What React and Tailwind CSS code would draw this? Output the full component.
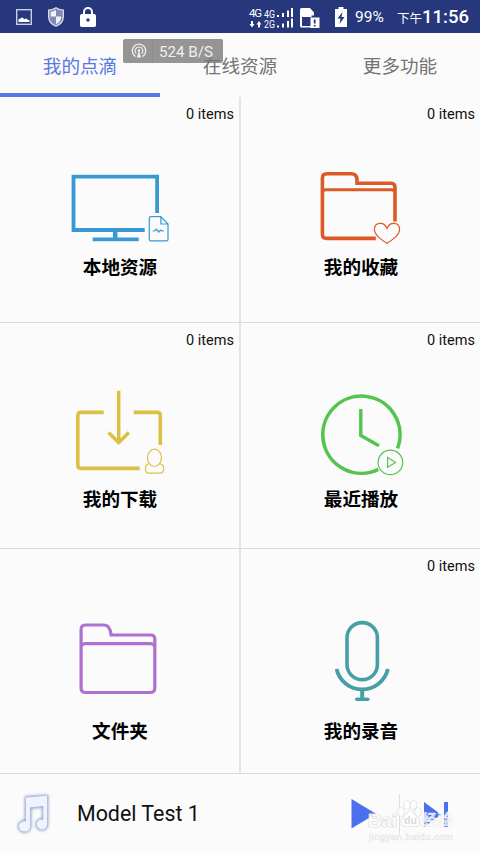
/**
 * 音楽プレーヤーのホーム画面
 */
import { useState } from 'react';

const TABS = ['我的点滴', '在线资源', '更多功能'];

// ローカルリソース
function MonitorIcon() {
    return (
        <svg className="h-[100px] w-[130px]" viewBox="55.300 155 130 100" fill="none" stroke="#3899d3">
            <path d="M157.400 213V176.600H73.800V230H145" strokeWidth="3.800" />
            <path d="M115.500 231v7" strokeWidth="4.400" />
            <path d="M93 239.400h46" strokeWidth="3.800" />
            <path d="M151 216.600h10.200l7.100 7.400v15.400q0 1.400-1.400 1.400H151q-1.400 0-1.400-1.400V218q0-1.400 1.400-1.400zM161.200 216.600V224h7.100" strokeWidth="1.200" />
            <path d="M153 231h2l1.600-1.800 2.400 2.800 2-2 1.200 1h2" strokeWidth="1.200" />
        </svg>
    );
}

// お気に入り
function FavoriteIcon() {
    return (
        <svg className="h-[100px] w-[130px]" viewBox="296.200 155 130 100" fill="none" stroke="#dc5a26">
            <path d="M395.200 221.500V187.500q0-4.200-4.200-4.200H357.200V180q0-6.200-6-6.200H327q-4.400 0-4.400 4.400V234q0 4.400 4.400 4.400H376" strokeWidth="3.600" />
            <path d="M322.600 193q0-3.200 3.400-3.200h65.800q3.400 0 3.400 3.200" strokeWidth="3" />
            <path d="M387.200 243.300C381 239.200 374.600 235 374.600 229.300c0-6.800 9.400-8.600 12.600-.9 3.200-7.700 12.600-5.900 12.600.9 0 5.700-6.400 9.900-12.600 14z" strokeWidth="1.200" />
        </svg>
    );
}

// ダウンロード
function DownloadIcon() {
    return (
        <svg className="h-[100px] w-[130px]" viewBox="55.300 387 130 100" fill="none" stroke="#dcc044">
            <path d="M104 412.400H81.500q-3.400 0-3.400 3.400V465q0 3.400 3.400 3.400H140M134 412.400h23.400q3.200 0 3.200 3.200V445" strokeWidth="3.600" />
            <path d="M119 390.800V442M108.800 432.600l10.200 10 10.200-10" strokeWidth="3.500" />
            <ellipse cx="154.800" cy="457.800" rx="7" ry="8.700" strokeWidth="1.200" />
            <path d="M149 463.800c-4.400.9-4.600 9.400 0 9.400h11.600c4.600 0 4.400-8.500 0-9.400" strokeWidth="1.200" />
        </svg>
    );
}

// 最近の再生
function RecentIcon() {
    return (
        <svg className="h-[100px] w-[130px]" viewBox="296.200 387 130 100" fill="none" stroke="#54c450">
            <path d="M397.700 448.400A38.600 38.600 0 1 0 378.500 469.400" strokeWidth="3.600" />
            <path d="M361 409v26.600l18.200 10.200" strokeWidth="3.400" />
            <circle cx="390.600" cy="462.400" r="12.300" strokeWidth="1.200" />
            <path d="M387.800 457.600v9.600l8-4.800z" strokeWidth="1.200" />
        </svg>
    );
}

// フォルダ
function FolderIcon() {
    return (
        <svg className="h-[100px] w-[130px]" viewBox="55.500 619 130 100" fill="none" stroke="#b070cf">
            <path d="M155.300 647V639q0-4-4-4H111.600q-.9-10-7.200-10H86q-4.400 0-4.400 4.400V647" strokeWidth="3.200" />
            <rect x="81.600" y="643.600" width="73.700" height="48.900" rx="4" strokeWidth="3.200" />
        </svg>
    );
}

// 録音
function RecordIcon() {
    return (
        <svg className="h-[100px] w-[130px]" viewBox="296.200 619 130 100" fill="none" stroke="#469fa5">
            <rect x="347.200" y="622.600" width="30.400" height="57" rx="15.200" strokeWidth="3.600" />
            <path d="M336.700 669a26.400 26.400 0 0 0 51.400 0" strokeWidth="3.800" />
            <path d="M362.400 689v9.500" strokeWidth="4" />
            <path d="M357 699.300h11" strokeWidth="3.600" strokeLinecap="round" />
        </svg>
    );
}

const ITEMS = [
    { label: '本地资源', count: '0 items', icon: MonitorIcon, cell: 'border-r-2 pt-[58px]' },
    { label: '我的收藏', count: '0 items', icon: FavoriteIcon, cell: 'pt-[58px]' },
    { label: '我的下载', count: '0 items', icon: DownloadIcon, cell: 'border-r-2 pt-16' },
    { label: '最近播放', count: '0 items', icon: RecentIcon, cell: 'pt-16' },
    { label: '文件夹', icon: FolderIcon, cell: 'border-r-2 pt-[70px]' },
    { label: '我的录音', count: '0 items', icon: RecordIcon, cell: 'pt-[70px]' }
];

function StatusBar() {
    return (
        <header className="flex h-[33px] items-center bg-[#26377b] pl-4 pr-[11px] text-white">
            <svg className="h-4 w-4" viewBox="0 0 16 16" fill="none">
                <rect x=".7" y=".7" width="14.600" height="14.600" stroke="#c8cde2" strokeWidth="1.400" />
                <path d="M2.500 13v-2.500q1-1.500 2.200-.8Q6 7.500 7.500 9.500q1.200 1 2 .2 1.500-.4 2 1 1.500-.2 2 .8V13z" fill="#fff" />
            </svg>
            <svg className="ml-4 h-5 w-4" viewBox="0 0 16 20">
                <path d="M8 .7Q11.500 3 15.300 3v7c0 5-3.500 7.700-7.300 9.300C4.200 17.700.7 15 .7 10V3Q4.500 3 8 .7z" fill="#7f8ab5" stroke="#e6e8f2" strokeWidth="1.200" />
                <path d="M8 3v6.500H2.800V4.700Q5.500 4.500 8 3zM8 9.500h5.200q.1 5-5.200 7.700z" fill="#f2f3f8" />
            </svg>
            <svg className="ml-4 h-5 w-4" viewBox="0 0 16 20">
                <path d="M4 8V5a4 4 0 0 1 8 0v3" fill="none" stroke="#fff" strokeWidth="2" />
                <rect y="7" width="16" height="13" rx="1.800" fill="#fff" />
                <circle cx="8" cy="13" r="1.700" fill="#26377b" />
            </svg>

            {/* 電波とSIM */}
            <svg className="ml-[152px] h-[22px] w-[72px] font-[Roboto]" viewBox="248 5 72 22" fill="#fff">
                <text x="249" y="15.500" fontSize="11.500" textLength="13">4G</text>
                <text x="264" y="16.500" fontSize="10" textLength="11" lengthAdjust="spacingAndGlyphs">4G</text>
                <text x="264" y="26.500" fontSize="10" textLength="11" lengthAdjust="spacingAndGlyphs">2G</text>
                <path d="M251 20h2v3h1.500L252 26.500 249.500 23h1.500zM258 26.500h2v-3h1.500L259 20l-2.500 3.500h1.500z" />
                <path d="M277 14h2v2h-2zM282 12h2v4h-2zM287 9.500h2v6.500h-2zM291 7h2v9h-2zM277 24.500h2v2h-2zM282 22.500h2v4h-2zM287 20h2v6.500h-2zM291 17.500h2v9h-2z" />
                <path d="M301.500 7h8.500l4 4.500v3h-2.500v12h-10a1.500 1.500 0 0 1-1.500-1.500V8.500q0-1.500 1.500-1.500z" />
                <path d="M302 16h9v9h-9z" fill="#26377b" />
                <path d="M310.500 16.500h9V27h-9z" />
                <path d="M313.800 18.500h1.800v4h-1.800zM313.800 24h1.800v1.500h-1.800z" fill="#26377b" />
            </svg>
            <svg className="ml-[15px] h-5 w-3" viewBox="0 0 12 20">
                <path d="M3.500 0h5v2H12v18H0V2h3.500z" fill="#fff" />
                <path d="M7.500 5 2.500 11.500h3L4.500 17l5-7h-3z" fill="#26377b" />
            </svg>
            <span className="ml-2 w-[42px] whitespace-nowrap font-[Roboto] text-[15.500px] leading-5">99%</span>
            <span className="mt-0.5 font-['Noto_Sans_CJK_SC',sans-serif] text-[12.500px] leading-5">下午</span>
            <span className="whitespace-nowrap font-[Roboto] text-[18.500px] font-medium leading-5">11:56</span>
        </header>
    );
}

function SpeedBadge() {
    return (
        <div className="absolute left-[123px] top-[39px] flex h-6 w-[100px] items-center rounded-[2px] bg-[#737373]/75 text-[#f0f0f0]">
            <svg className="ml-2 h-4 w-4" viewBox="0 0 16 16" fill="none" stroke="currentColor" strokeWidth="1.300">
                <path d="M4.500 13.600a6.700 6.700 0 1 1 7 0M5.300 10.500a3.800 3.800 0 1 1 5.400 0" />
                <path d="M8 7.500 5.800 14.500h4.400z" fill="currentColor" stroke="none" />
                <circle cx="8" cy="7.500" r="1.300" fill="currentColor" stroke="none" />
            </svg>
            <span className="ml-[5px] h-6 w-px bg-black/5" />
            <span className="ml-1.5 mt-0.5 whitespace-nowrap font-[Roboto] text-[15.200px] leading-6">524 B/S</span>
        </div>
    );
}

function PlayerBar() {
    return (
        <footer className="flex h-[79px] items-center">
            <svg className="ml-3 h-12 w-11 overflow-visible" viewBox="12 789 44 48">
                <defs>
                    <filter id="glow" x="-30%" y="-30%" width="160%" height="160%">
                        <feGaussianBlur stdDeviation="1.700" />
                    </filter>
                    <path id="note" d="M26.500 797 46.500 795.500V823.500a4.600 4.400 0 1 1-2.600-4V804.500L29.500 806V825.500a5 4.600 0 1 1-3-4.300z" />
                </defs>
                <use href="#note" fill="#8d9ac4" stroke="#8d9ac4" strokeWidth="3.400" filter="url(#glow)" />
                <use href="#note" fill="#eef3ff" stroke="#eef3ff" strokeWidth="1.200" />
                <path d="M27 797 46 795.500V803L27 805z" fill="#eef3ff" />
            </svg>
            <span className="ml-[21px] mt-px font-[Roboto] text-[21.400px] leading-8 text-[#111]">Model Test 1</span>
            <svg className="ml-auto mr-[31px] h-10 w-[98px]" viewBox="351 793 98 40" fill="#4a70ee">
                <path d="M351.500 798v29.500L376 812.800z" />
                <path d="M399 793h1v40h-1z" fill="#dedede" />
                <path d="M424 801v25l17-12.500zM444 801h4v25h-4z" />
            </svg>
        </footer>
    );
}

// 右下の透かし
function Watermark() {
    return (
        <svg className="pointer-events-none absolute bottom-0 right-0 h-[66px] w-[122px] font-['Liberation_Sans',sans-serif]" viewBox="358 787 122 66">
            <g fill="#fff" fillOpacity=".8" stroke="#dcdcdc" strokeWidth="1.200" paintOrder="stroke">
                <ellipse cx="401" cy="812" rx="3" ry="4" />
                <ellipse cx="407" cy="805" rx="3" ry="4" />
                <ellipse cx="413.500" cy="805" rx="3" ry="4" />
                <ellipse cx="418" cy="812" rx="3" ry="4" />
                <path d="M410 811c-3 0-3.500 4-6.500 6.500-4 4-2 9 2 9 2.500 0 6-.6 9 0 5 .6 7-4.500 3-9-3-3-4-6.500-7.500-6.500z" />
                <text x="368" y="827" fontSize="18" fontWeight="bold" textLength="29" lengthAdjust="spacingAndGlyphs">Bai</text>
            </g>
            <text x="422" y="825" fontSize="14.500" fontWeight="bold" fill="#fff" fillOpacity=".75" stroke="#e2e2e2" strokeWidth=".6" paintOrder="stroke" textLength="30" fontFamily="Noto Sans CJK SC">经验</text>
            <text x="404" y="823.500" fontSize="10.500" fontWeight="bold" fill="#dadada">du</text>
            <text x="369" y="840" fontSize="9.500" fill="#fff" stroke="#e4e4e4" strokeWidth=".5" textLength="84">jingyan.baidu.com</text>
        </svg>
    );
}

export default function App() {
    const [active, setActive] = useState(0);

    return (
        <div className="relative flex h-[853px] w-[480px] flex-col overflow-hidden bg-[#fbfbfb] font-['Noto_Sans_CJK_SC',sans-serif]">
            <StatusBar />

            {/* タブ */}
            <nav className="grid h-16 grid-cols-3">
                {TABS.map((tab, index) => (
                    <button
                        key={tab}
                        onClick={() => setActive(index)}
                        className={`border-b-4 pb-0.5 pt-1.5 text-[18.600px] leading-[52px] ${
                            index === active
                                ? 'border-[#5677e4] text-[#5677e4]'
                                : 'border-transparent text-[#747474]'
                        }`}
                    >
                        {tab}
                    </button>
                ))}
            </nav>

            {/* メニュー */}
            <main className="grid grid-cols-[241px_239px] grid-rows-[226px_226px_225px]">
                {ITEMS.map(({ label, count, icon: Icon, cell }) => (
                    <section key={label} className={`relative flex flex-col items-center border-b border-b-[#dadada] border-r-[#e4e4e4] ${cell}`}>
                        {count && (
                            <span className="absolute right-[5px] top-[9px] font-[Roboto] text-[14.500px] leading-[18px] text-[#111]">
                                {count}
                            </span>
                        )}
                        <Icon />
                        <h2 className="-mt-px pl-px text-[18.600px] font-bold leading-6 text-black">{label}</h2>
                    </section>
                ))}
            </main>

            <PlayerBar />
            <SpeedBadge />
            <Watermark />
        </div>
    );
}
